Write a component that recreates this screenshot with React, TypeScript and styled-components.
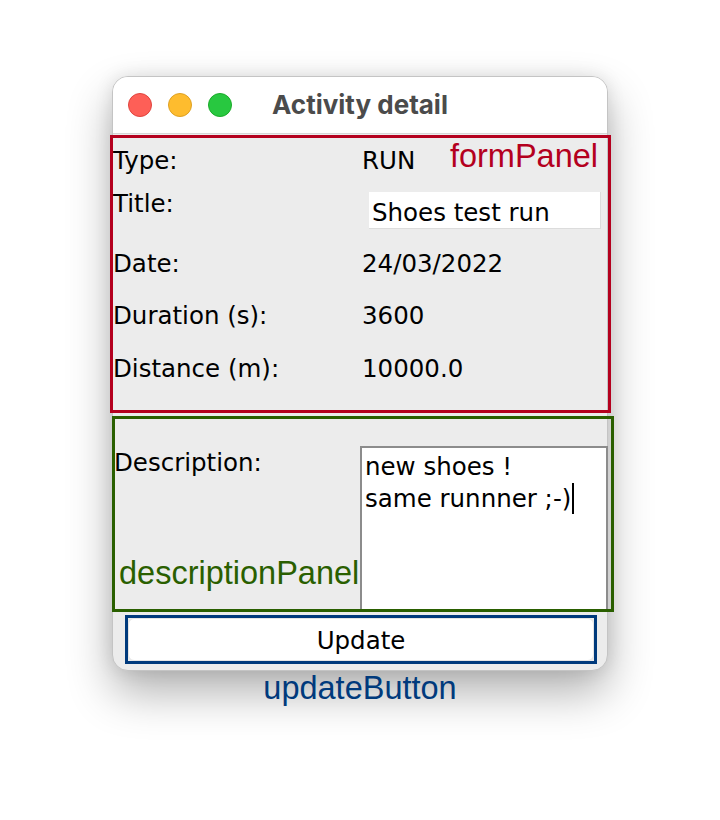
import styled, { createGlobalStyle } from 'styled-components';

const GlobalStyle = createGlobalStyle`
    html, body {
        margin: 0;
        padding: 0;
        background: #ffffff;
    }
    body {
        width: 720px;
        height: 820px;
        overflow: hidden;
    }
`;

const rows = [
    { label: 'Date:', value: '24/03/2022', height: 52 },
    { label: 'Duration (s):', value: '3600', height: 53 },
    { label: 'Distance (m):', value: '10000.0', height: 28 },
];

const App = () => {
    return (<>
        <GlobalStyle />
        <Page>
            <Window>
                <TitleBar>
                    <Lights>
                        <Light color="#fe5f57" edge="#e0443e" />
                        <Light color="#febc2e" edge="#dea123" />
                        <Light color="#28c840" edge="#1aab29" />
                    </Lights>
                    <WindowTitle>Activity detail</WindowTitle>
                </TitleBar>
                <FormPanel>
                    <Annotation color="#b4001e" style={{ right: 10, top: 0 }}>formPanel</Annotation>
                    <Row height={43}>
                        <Label>Type:</Label>
                        <Value>RUN</Value>
                    </Row>
                    <Row height={60}>
                        <Label>Title:</Label>
                        <TextField>Shoes test run</TextField>
                    </Row>
                    {rows.map((r) => (
                        <Row key={r.label} height={r.height}>
                            <Label>{r.label}</Label>
                            <Value>{r.value}</Value>
                        </Row>
                    ))}
                </FormPanel>
                <DescriptionPanel>
                    <Annotation color="#2a5f00" style={{ left: 4, bottom: 18 }}>descriptionPanel</Annotation>
                    <DescLabel>Description:</DescLabel>
                    <TextArea>
                        <div>new shoes !</div>
                        <div>same runnner ;-)<Caret /></div>
                    </TextArea>
                </DescriptionPanel>
                <ButtonFrame>
                    <UpdateButton>Update</UpdateButton>
                </ButtonFrame>
            </Window>
            <Caption>updateButton</Caption>
        </Page>
    </>)
}

const Page = styled.div`
    display: flex;
    flex-direction: column;
    align-items: center;
    padding-top: 76px;
    font-family: "DejaVu Sans", sans-serif;
`;

const Window = styled.div`
    width: 496px;
    height: 595px;
    box-sizing: border-box;
    border-radius: 16px;
    background: #ececec;
    border: 1px solid #c4c4c4;
    box-shadow: 0 22px 45px rgba(0, 0, 0, 0.3), 0 0 18px rgba(0, 0, 0, 0.1);
    display: flex;
    flex-direction: column;
`;

const TitleBar = styled.div`
    height: 56px;
    flex-shrink: 0;
    background: #ffffff;
    border-radius: 15px 15px 0 0;
    border-bottom: 1px solid #d6d6d6;
    position: relative;
    display: flex;
    align-items: center;
    justify-content: center;
`;

const Lights = styled.div`
    position: absolute;
    left: 15px;
    top: 16px;
    display: flex;
    gap: 16px;
`;

const Light = styled.div<{ color: string; edge: string }>`
    width: 24px;
    height: 24px;
    border-radius: 50%;
    box-sizing: border-box;
    background: ${(p) => p.color};
    border: 1px solid ${(p) => p.edge};
`;

const WindowTitle = styled.div`
    font-family: "Inter", "Liberation Sans", sans-serif;
    font-weight: 700;
    font-size: 26px;
    color: #4b4b4b;
    margin-top: -1px;
`;

const FormPanel = styled.div`
    position: relative;
    margin: 1px 0 0 -3px;
    width: 501px;
    height: 278px;
    box-sizing: border-box;
    border: 3px solid #b4001e;
    padding: 9px 0 0 0;
`;

const Row = styled.div<{ height: number }>`
    height: ${(p) => p.height}px;
    display: flex;
    align-items: flex-start;
`;

const Label = styled.div`
    width: 249px;
    font-size: 24.5px;
    line-height: 28px;
    color: #000;
`;

const Value = styled.div`
    font-size: 24.5px;
    line-height: 28px;
    color: #000;
`;

const TextField = styled.div`
    margin: 2px 0 0 7px;
    width: 232px;
    height: 37px;
    box-sizing: border-box;
    background: #fff;
    border-right: 1px solid #dcdcdc;
    border-bottom: 1px solid #dcdcdc;
    padding: 7px 0 0 3px;
    font-size: 24.5px;
    line-height: 28px;
    color: #000;
`;

const Annotation = styled.div<{ color: string }>`
    position: absolute;
    font-family: "Liberation Sans", Arial, sans-serif;
    font-size: 32.5px;
    line-height: 36px;
    color: ${(p) => p.color};
`;

const DescriptionPanel = styled.div`
    position: relative;
    margin: 3px 0 0 -1px;
    width: 502px;
    height: 196px;
    box-sizing: border-box;
    border: 3px solid #2a5f00;
    display: flex;
    align-items: stretch;
`;

const DescLabel = styled.div`
    width: 245px;
    margin-left: -1px;
    padding-top: 30px;
    font-size: 24.5px;
    line-height: 28px;
    color: #000;
`;

const TextArea = styled.div`
    flex: 1;
    margin: 27px 3px 0 1px;
    background: #fff;
    border: 2px solid #8c8c8c;
    border-bottom: none;
    padding: 3px 0 0 3px;
    font-size: 24.5px;
    line-height: 32px;
    color: #000;
`;

const Caret = styled.span`
    display: inline-block;
    width: 2px;
    height: 31px;
    background: #000;
    vertical-align: -7px;
    margin-left: 1px;
`;

const ButtonFrame = styled.div`
    margin: 3px 0 0 12px;
    width: 472px;
    height: 49px;
    box-sizing: border-box;
    border: 3px solid #003a7c;
    display: flex;
`;

const UpdateButton = styled.div`
    flex: 1;
    background: #fff;
    border-radius: 6px;
    border: 1px solid #e4e4e4;
    display: flex;
    align-items: center;
    justify-content: center;
    padding-top: 2px;
    font-size: 24.5px;
    color: #000;
`;

const Caption = styled.div`
    margin-top: -1px;
    font-family: "Liberation Sans", Arial, sans-serif;
    font-size: 32.5px;
    line-height: 36px;
    color: #003a7c;
`;

export default App;
